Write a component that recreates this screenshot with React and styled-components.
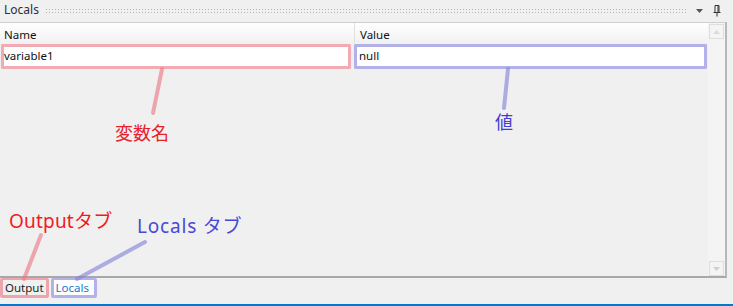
import React from "react";
import styled, { createGlobalStyle } from "styled-components";

const Global = createGlobalStyle`
  html, body { margin: 0; padding: 0; background: #f0f0f0; }
  body { font-family: "Noto Sans", "Liberation Sans", sans-serif; }
`;

const Root = styled.div`
  position: relative;
  width: 733px;
  height: 306px;
  background: #f0f0f0;
  display: flex;
  flex-direction: column;
  overflow: hidden;
  font-size: 11.5px;
  color: #1e1e1e;
`;

const TitleBar = styled.div`
  height: 22px;
  display: flex;
  align-items: center;
  padding: 0 12px 0 4px;
  gap: 6px;
  box-sizing: border-box;
`;

const Title = styled.span`
  color: #2d2d3a;
  font-size: 12px;
  line-height: 1;
  margin-top: -2px;
`;

const Dots = styled.div`
  flex: 1;
  height: 6px;
  margin-top: -1px;
  background-image: radial-gradient(circle, #b4b4b4 0.8px, transparent 0.9px);
  background-size: 3px 3px;
`;

const IconBox = styled.span`
  display: flex;
  align-items: center;
  margin-left: ${(p) => p.$ml || 0}px;
`;

const Panel = styled.div`
  height: 256px;
  width: 727px;
  box-sizing: border-box;
  border-top: 1px solid #cfcfcf;
  border-right: 2px solid #b8b8b8;
  border-bottom: 2px solid #a8a8a8;
  display: flex;
`;

const TableArea = styled.div`
  flex: 1;
  display: flex;
  flex-direction: column;
`;

const HeaderRow = styled.div`
  height: 20px;
  display: grid;
  grid-template-columns: 354px 1fr;
  background: linear-gradient(#ffffff, #f2f2f2);
`;

const HeaderCell = styled.div`
  padding-left: ${(p) => p.$pl}px;
  padding-top: 3px;
  display: flex;
  align-items: center;
  color: #111;
  border-left: ${(p) => (p.$divider ? "1px solid #e0e0e0" : "none")};
`;

const DataRow = styled.div`
  margin-top: 1px;
  height: 25px;
  display: grid;
  grid-template-columns: 350px 353px;
  column-gap: 3px;
  padding-left: 1px;
`;

const Cell = styled.div`
  background: #fff;
  border: 3px solid ${(p) => p.$c};
  border-radius: 2px;
  box-sizing: border-box;
  display: flex;
  align-items: center;
  padding-left: ${(p) => p.$pl}px;
  padding-bottom: 2px;
  color: #111;
  box-shadow: 0 0 0.6px ${(p) => p.$c};
`;

const ScrollBar = styled.div`
  width: 17px;
  background: #f4f4f4;
  display: flex;
  flex-direction: column;
  justify-content: space-between;
  padding: 1px 0 0 1px;
  box-sizing: border-box;
`;

const ScrollBtn = styled.div`
  width: 15px;
  height: 15px;
  box-sizing: border-box;
  border: 1px solid #dedede;
  display: flex;
  align-items: center;
  justify-content: center;
  background: #f4f4f4;
`;

const Tabs = styled.div`
  display: flex;
  gap: 2px;
  height: 20px;
  align-items: stretch;
`;

const Tab = styled.div`
  border: 3px solid ${(p) => p.$c};
  border-top-width: 2px;
  box-sizing: border-box;
  padding: 0 ${(p) => (p.$active ? 5 : 2)}px 0 ${(p) => (p.$active ? 2 : 2)}px;
  display: flex;
  align-items: center;
  background: ${(p) => (p.$active ? "#fff" : "#f0f0f0")};
  color: ${(p) => (p.$active ? "#1a78cc" : "#1e1e1e")};
  border-radius: 2px;
`;

const Spacer = styled.div`
  flex: 1;
`;

const BlueBar = styled.div`
  height: 2px;
  background: #007acc;
`;

const Note = styled.span`
  position: absolute;
  left: ${(p) => p.$x}px;
  top: ${(p) => p.$y}px;
  color: ${(p) => p.$c};
  font-family: "Noto Sans", "Noto Sans CJK JP", sans-serif;
  font-size: ${(p) => p.$fs || 18}px;
  letter-spacing: ${(p) => p.$ls || 0}px;
  line-height: 1;
  white-space: nowrap;
  pointer-events: none;
`;

const Overlay = styled.svg`
  position: absolute;
  left: 0;
  top: 0;
  pointer-events: none;
`;

const RED = "rgba(236, 120, 132, 0.62)";
const BLUE = "rgba(130, 130, 220, 0.62)";

export default function App() {
  return (
    <>
      <Global />
      <Root>
        <TitleBar>
          <Title>Locals</Title>
          <Dots />
          <IconBox $ml={2}>
            <svg width="8" height="5" viewBox="0 0 8 5">
              <path d="M0 0 H7 L3.5 4 Z" fill="#555" />
            </svg>
          </IconBox>
          <IconBox $ml={3}>
            <svg width="8" height="12" viewBox="0 0 8 12">
              <path d="M2 0.5 H6 V7 M2 0.5 V7 M0.5 7.5 H7.5 M4 7.5 V11.5 M5 1 V7" stroke="#333" strokeWidth="1" fill="none" />
            </svg>
          </IconBox>
        </TitleBar>
        <Panel>
          <TableArea>
            <HeaderRow>
              <HeaderCell $pl={4}>Name</HeaderCell>
              <HeaderCell $pl={5} $divider>Value</HeaderCell>
            </HeaderRow>
            <DataRow>
              <Cell $c={RED} $pl={0}>variable1</Cell>
              <Cell $c={BLUE} $pl={2}>null</Cell>
            </DataRow>
          </TableArea>
          <ScrollBar>
            <ScrollBtn>
              <svg width="7" height="4" viewBox="0 0 7 4">
                <path d="M0 4 H7 L3.5 0 Z" fill="#dadada" />
              </svg>
            </ScrollBtn>
            <ScrollBtn>
              <svg width="7" height="4" viewBox="0 0 7 4">
                <path d="M0 0 H7 L3.5 4 Z" fill="#cfcfcf" />
              </svg>
            </ScrollBtn>
          </ScrollBar>
        </Panel>
        <Tabs>
          <Tab $c={RED}>Output</Tab>
          <Tab $c={BLUE} $active>Locals</Tab>
        </Tabs>
        <Spacer />
        <BlueBar />

        <Overlay width="733" height="306">
          <line x1="162" y1="69" x2="153" y2="113" stroke={RED} strokeWidth="4" strokeLinecap="round" />
          <line x1="508" y1="69" x2="504" y2="108" stroke={BLUE} strokeWidth="4" strokeLinecap="round" />
          <line x1="41" y1="235" x2="24" y2="279" stroke={RED} strokeWidth="4" strokeLinecap="round" />
          <line x1="145" y1="242" x2="77" y2="279" stroke={BLUE} strokeWidth="4" strokeLinecap="round" />
        </Overlay>

        <Note $x={115} $y={124} $c="#e8202a">変数名</Note>
        <Note $x={495} $y={113} $c="#3f3fd0">値</Note>
        <Note $x={9} $y={212} $c="#f01c24" $fs={19} $ls={0.2}>Outputタブ</Note>
        <Note $x={137} $y={217} $c="#4848d8" $fs={19} $ls={0.8}>Locals タブ</Note>
      </Root>
    </>
  );
}
